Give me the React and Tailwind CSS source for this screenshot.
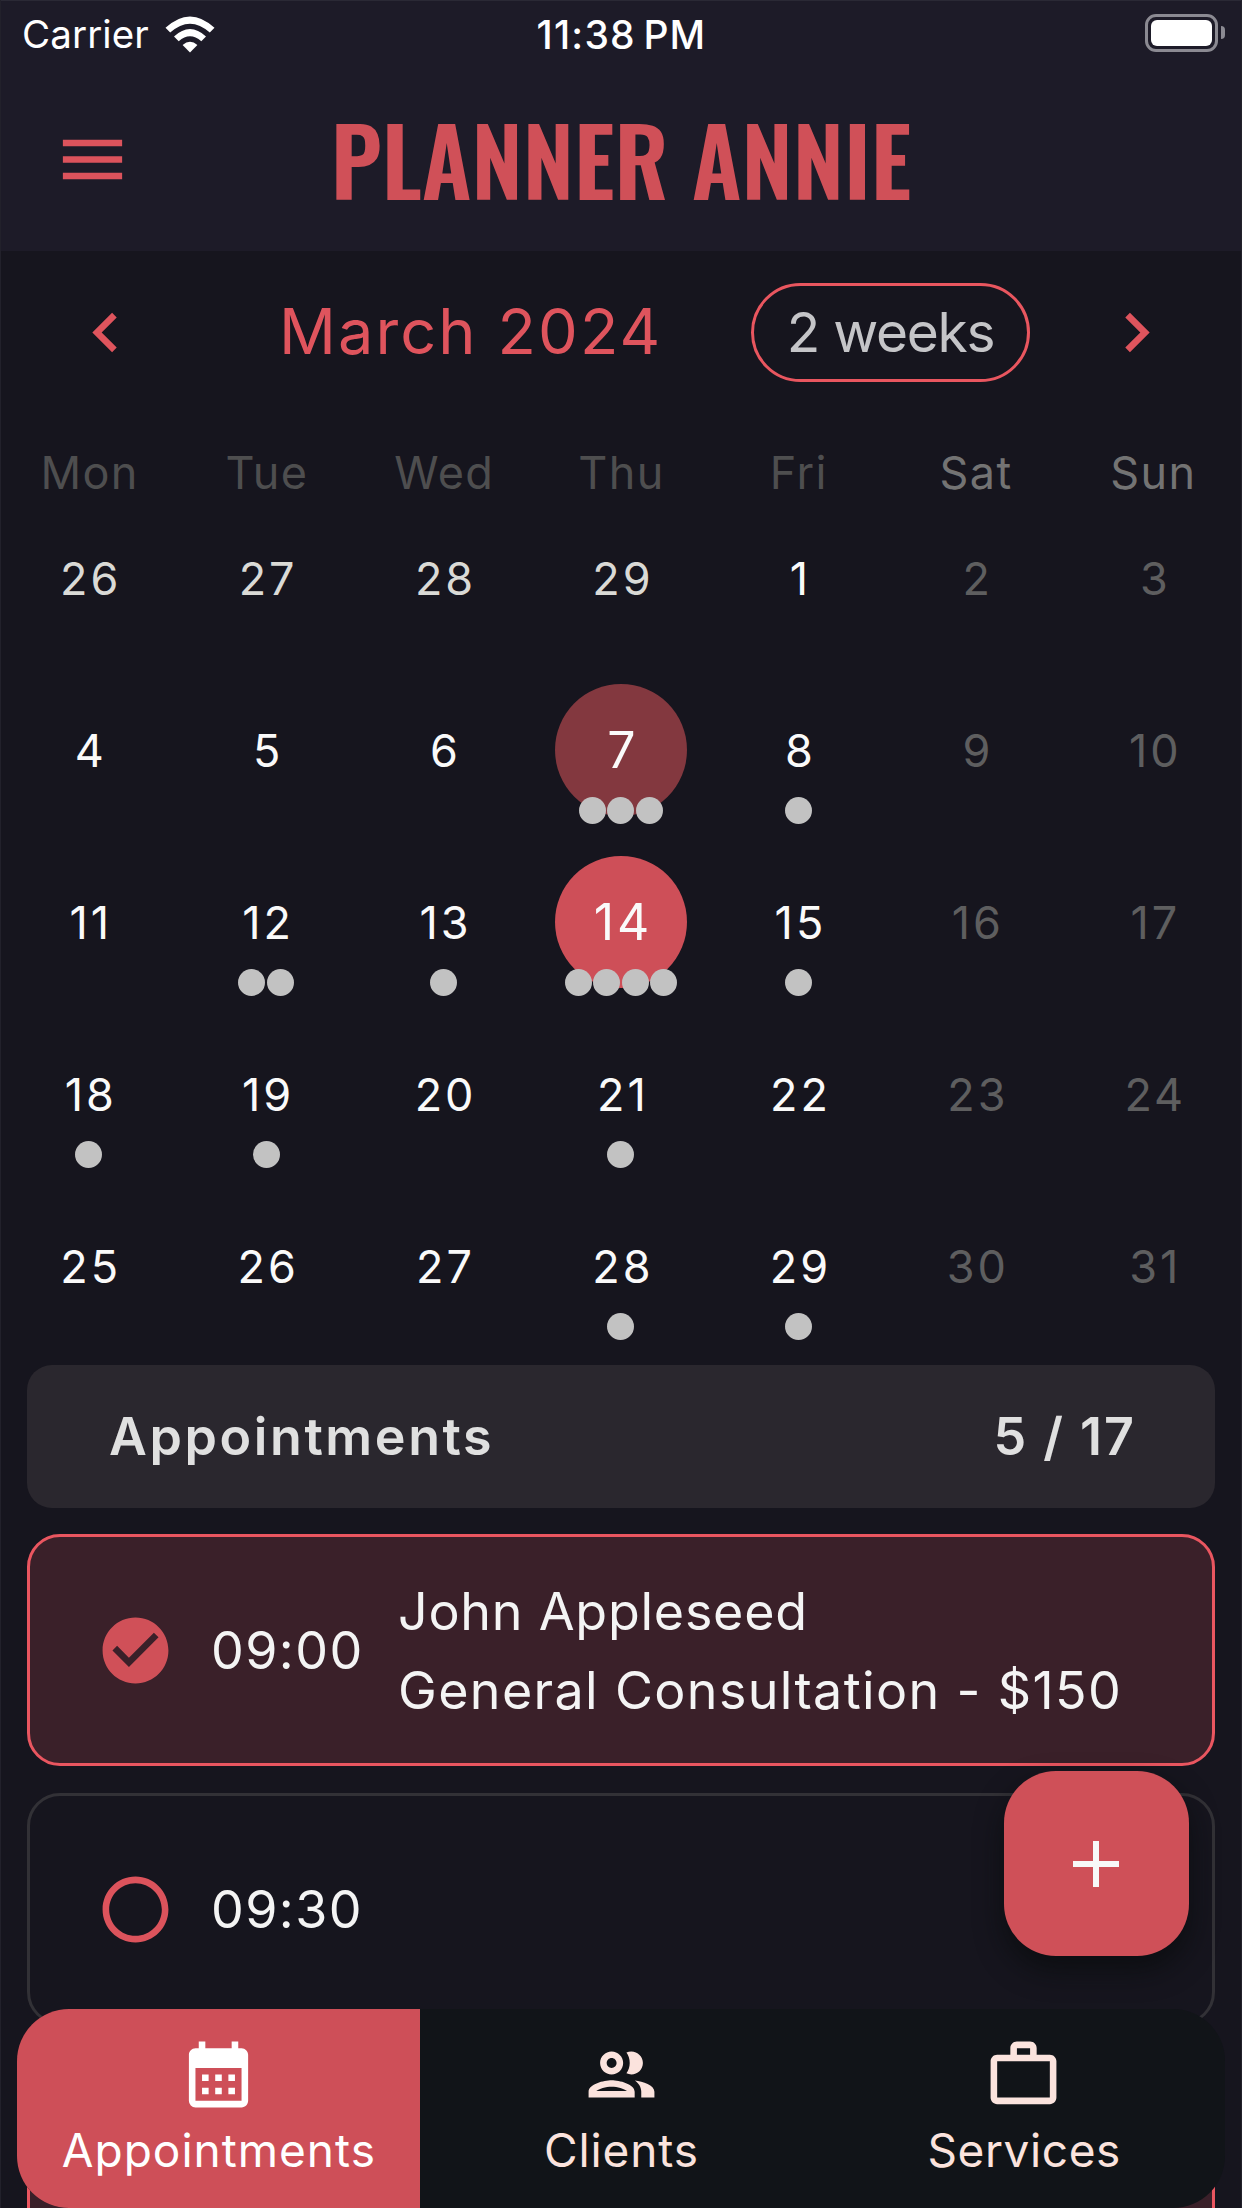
import React from "react";

const WEEKDAYS = ["Mon", "Tue", "Wed", "Thu", "Fri", "Sat", "Sun"];

const WEEKS = [
  [{ d: 26, out: true }, { d: 27, out: true }, { d: 28, out: true }, { d: 29, out: true }, { d: 1 }, { d: 2 }, { d: 3 }],
  [{ d: 4 }, { d: 5 }, { d: 6 }, { d: 7, today: true, n: 3 }, { d: 8, n: 1 }, { d: 9 }, { d: 10 }],
  [{ d: 11 }, { d: 12, n: 2 }, { d: 13, n: 1 }, { d: 14, selected: true, n: 4 }, { d: 15, n: 1 }, { d: 16 }, { d: 17 }],
  [{ d: 18, n: 1 }, { d: 19, n: 1 }, { d: 20 }, { d: 21, n: 1 }, { d: 22 }, { d: 23 }, { d: 24 }],
  [{ d: 25 }, { d: 26 }, { d: 27 }, { d: 28, n: 1 }, { d: 29, n: 1 }, { d: 30 }, { d: 31 }],
];

function Icon({ path, className = "" }) {
  return (
    <svg viewBox="0 0 24 24" fill="currentColor" className={`size-[79px] shrink-0 ${className}`}>
      <path d={path} />
    </svg>
  );
}

const ICONS = {
  menu: "M3 18h18v-2H3v2zm0-5h18v-2H3v2zm0-7v2h18V6H3z",
  left: "M15.41 7.41L14 6l-6 6 6 6 1.41-1.41L10.83 12z",
  right: "M10 6L8.59 7.41 13.17 12l-4.58 4.59L10 18l6-6z",
  checked: "M12 2C6.48 2 2 6.48 2 12s4.48 10 10 10 10-4.48 10-10S17.52 2 12 2zm-2 15l-5-5 1.41-1.41L10 14.17l7.59-7.59L19 8l-9 9z",
  unchecked: "M12 2C6.48 2 2 6.48 2 12s4.48 10 10 10 10-4.48 10-10S17.52 2 12 2zm0 18c-4.42 0-8-3.58-8-8s3.58-8 8-8 8 3.58 8 8-3.58 8-8 8z",
  calendar: "M19 4h-1V2h-2v2H8V2H6v2H5c-1.11 0-1.99.9-1.99 2L3 20a2 2 0 0 0 2 2h14c1.1 0 2-.9 2-2V6c0-1.1-.9-2-2-2zm0 16H5V10h14v10zM9 14H7v-2h2v2zm4 0h-2v-2h2v2zm4 0h-2v-2h2v2zm-8 4H7v-2h2v2zm4 0h-2v-2h2v2zm4 0h-2v-2h2v2z",
  people: "M9 13.75c-2.34 0-7 1.17-7 3.5V19h14v-1.75c0-2.33-4.66-3.5-7-3.5zM4.34 17c.84-.58 2.87-1.25 4.66-1.25s3.82.67 4.66 1.25H4.34zM9 12c1.93 0 3.5-1.57 3.5-3.5S10.93 5 9 5 5.5 6.57 5.5 8.5 7.07 12 9 12zm0-5c.83 0 1.5.67 1.5 1.5S9.83 10 9 10s-1.5-.67-1.5-1.5S8.17 7 9 7zm7.04 6.81c1.16.84 1.96 1.96 1.96 3.44V19h4v-1.75c0-2.02-3.5-3.17-5.96-3.44zM15 12c1.93 0 3.5-1.57 3.5-3.5S16.93 5 15 5c-.54 0-1.04.13-1.5.35.63.89 1 1.98 1 3.15s-.37 2.26-1 3.15c.46.22.96.35 1.5.35z",
  work: "M14 6V4h-4v2h4zM4 8v11h16V8H4zm16-2c1.11 0 2 .89 2 2v11c0 1.11-.89 2-2 2H4c-1.11 0-2-.89-2-2l.01-11c0-1.11.88-2 1.99-2h4V4c0-1.11.89-2 2-2h4c1.11 0 2 .89 2 2v2h4z",
};

function StatusBar() {
  return (
    <div className="grid h-[66px] grid-cols-3 items-center pl-[22px] pr-[17px] text-[39px] leading-none text-white">
      <div className="flex items-center gap-[16px]">
        <span className="text-[38.5px] tracking-[0.1px]">Carrier</span>
        <svg viewBox="0 0 50 38" className="h-[38px] w-[50px]" fill="white">
          <path d="M25 37.5 L17.6 30 Q25 23.5 32.4 30 Z" />
          <path d="M9 21.4 Q25 6.4 41 21.4 L36.3 26.3 Q25 16.4 13.7 26.3 Z" />
          <path d="M0.5 12.8 Q25 -10 49.5 12.8 L44.8 17.6 Q25 -0.2 5.2 17.6 Z" />
        </svg>
      </div>
      <span className="pr-[4px] text-center font-medium tracking-[1.2px] [word-spacing:-4px]">11:38 PM</span>
      <div className="flex items-center justify-end gap-[3px] pb-[3px]">
        <div className="h-[38px] w-[73px] rounded-[11px] border-[3px] border-[#8b8a92] p-[3px]">
          <div className="h-full w-full rounded-[6px] bg-white" />
        </div>
        <div className="h-[13px] w-[4px] rounded-r-full bg-[#8b8a92]" />
      </div>
    </div>
  );
}

function AppBar() {
  return (
    <div className="flex h-[182px] items-center px-[53px] text-[#d05058]">
      <Icon path={ICONS.menu} className="mt-[2px] text-[#dc535c]" />
      <h1 className="flex-1 pt-[2px] pr-[79px] text-center font-['Oswald','Roboto_Condensed',sans-serif] text-[92.5px] leading-none font-semibold whitespace-nowrap">
        PLANNER ANNIE
      </h1>
    </div>
  );
}

function DayCell({ day, weekend }) {
  const { d, out, today, selected, n = 0 } = day;
  const tone = today || selected ? "text-[#fafafa]" : weekend ? "text-[#5e5e5f]" : out ? "text-[#dadad6]" : "text-[#fafafa]";
  const disc = today ? "bg-[#83383f] text-[50px]" : selected ? "bg-[#ce4f58] text-[50px]" : "text-[45px]";
  return (
    <div className="relative flex h-[172px] items-center justify-center">
      <div className={`flex size-[132px] items-center justify-center rounded-full pl-[4px] leading-none tracking-[3px] ${tone} ${disc}`}>{d}</div>
      {n > 0 && (
        <div className="absolute inset-x-0 top-[133px] flex justify-center gap-[1.4px]">
          {Array.from({ length: n }, (_, i) => (
            <span key={i} className="size-[27px] rounded-full bg-[#c2c2c2]" />
          ))}
        </div>
      )}
    </div>
  );
}

function Calendar() {
  return (
    <section className="h-[1114px] shrink-0">
      <div className="flex h-[162px] items-center px-[66px] text-[#df545d]">
        <Icon path={ICONS.left} />
        <h2 className="ml-[134px] w-[375px] pb-[2px] text-[63px] leading-none tracking-[2.1px] whitespace-nowrap">March 2024</h2>
        <div className="ml-[97px] flex h-[99px] w-[279px] items-center justify-center rounded-full border-[3px] border-[#e9565f] text-[55px] leading-none tracking-[-1.3px] text-[#c5c5c8]">
          2 weeks
        </div>
        <Icon path={ICONS.right} className="ml-auto" />
      </div>
      <div className="mt-[20px] grid h-[78px] grid-cols-7 items-center pl-[1px] text-center text-[45px] leading-none tracking-[1.4px]">
        {WEEKDAYS.map((w, i) => (
          <span key={w} className={i > 4 ? "text-[#737373]" : "text-[#4e4e4f]"}>{w}</span>
        ))}
      </div>
      <div className="-mt-[19px] grid grid-cols-7">
        {WEEKS.map((week) => week.map((day, i) => <DayCell key={`${day.d}-${i}`} day={day} weekend={i > 4} />))}
      </div>
    </section>
  );
}

function Slot({ booked, time, children }) {
  return (
    <div
      className={`flex h-[232px] shrink-0 items-center rounded-[33px] border-[3px] pl-[66px] text-[52px] leading-[79px] text-[#f4f4f4] ${
        booked ? "border-[#ea5660] bg-[#3a2029]" : "border-[#323136]"
      }`}
    >
      <Icon path={booked ? ICONS.checked : ICONS.unchecked} className={booked ? "text-[#d05058]" : "text-[#dc535c]"} />
      <span className="ml-[36px] w-[187px] pt-[1px] tracking-[1.4px]">{time}</span>
      <div className="pt-[2px] whitespace-nowrap">{children}</div>
    </div>
  );
}

function NavItem({ icon, label, active, tracking }) {
  return (
    <div className={`flex flex-1 flex-col items-center pt-[26px] ${active ? "bg-[#ce4f58] text-white" : "text-[#fbe3dd]"}`}>
      <Icon path={icon} />
      <span className={`mt-[13px] pl-[1px] text-[46px] leading-[46px] ${tracking}`}>{label}</span>
    </div>
  );
}

export default function App() {
  return (
    <div className="relative flex h-[2208px] w-[1242px] flex-col overflow-hidden bg-[#16151e] font-['Inter',sans-serif] font-normal">
      <header className="h-[251px] shrink-0 border-t border-[#2a2935] bg-[#1d1b28]">
        <StatusBar />
        <AppBar />
      </header>

      <Calendar />

      <main className="flex flex-col px-[27px]">
        <div className="flex h-[143px] shrink-0 items-center justify-between rounded-[25px] bg-[#2a272e] px-[82px] text-[52px] font-semibold leading-none text-[#e0e0e0]">
          <span className="tracking-[2.6px]">Appointments</span>
          <span className="-mr-[3px] tracking-[2px]">5 / 17</span>
        </div>
        <div className="mt-[26px] flex flex-col gap-[27px]">
          <Slot booked time="09:00">
            <div className="tracking-[0.75px]">John Appleseed</div>
            <div className="tracking-[1.35px]">General Consultation - $150</div>
          </Slot>
          <Slot time="09:30" />
          <Slot booked />
        </div>
      </main>

      <button className="absolute top-[1771px] left-[1003.5px] flex size-[185px] items-center justify-center rounded-[52px] bg-[#cf5058] shadow-[0_14px_28px_rgba(8,10,10,0.65)]">
        <svg viewBox="0 0 46 46" className="size-[46px]" stroke="#f8f8f8" strokeWidth="6">
          <path d="M23 0v46M0 23h46" />
        </svg>
      </button>

      <nav className="absolute bottom-0 left-[17px] flex h-[199px] w-[1208px] overflow-hidden rounded-[52px] bg-[#111418]">
        <NavItem active icon={ICONS.calendar} label="Appointments" tracking="tracking-[1px]" />
        <NavItem icon={ICONS.people} label="Clients" tracking="tracking-[0.9px]" />
        <NavItem icon={ICONS.work} label="Services" tracking="tracking-[0.6px]" />
      </nav>
      <div className="pointer-events-none absolute inset-0 border-x border-[#22212b]" />
    </div>
  );
}
